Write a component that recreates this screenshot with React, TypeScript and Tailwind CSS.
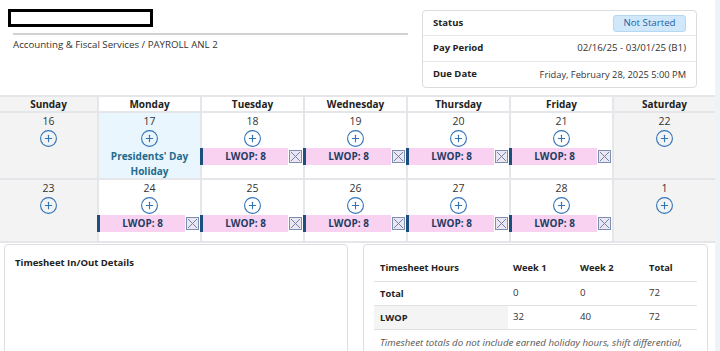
import { CirclePlus } from 'lucide-react';

type Kind = 'weekend' | 'holiday' | 'lwop';

const DAYS = ['Sunday', 'Monday', 'Tuesday', 'Wednesday', 'Thursday', 'Friday', 'Saturday'];

const WEEKS: { d: string; kind: Kind }[][] = [
  [
    { d: '16', kind: 'weekend' },
    { d: '17', kind: 'holiday' },
    { d: '18', kind: 'lwop' },
    { d: '19', kind: 'lwop' },
    { d: '20', kind: 'lwop' },
    { d: '21', kind: 'lwop' },
    { d: '22', kind: 'weekend' },
  ],
  [
    { d: '23', kind: 'weekend' },
    { d: '24', kind: 'lwop' },
    { d: '25', kind: 'lwop' },
    { d: '26', kind: 'lwop' },
    { d: '27', kind: 'lwop' },
    { d: '28', kind: 'lwop' },
    { d: '1', kind: 'weekend' },
  ],
];

const HOURS = [
  { label: 'Total', w1: '0', w2: '0', total: '72', shade: false },
  { label: 'LWOP', w1: '32', w2: '40', total: '72', shade: true },
];

function LwopBar() {
  return (
    <div className="mt-[2px] -ml-[2px] flex h-[17px] items-center">
      <div className="flex h-full flex-1 items-center justify-center border-l-[3px] border-[#1d4f7c] bg-[#f9d2f1] text-[10px] font-bold text-[#1e3d63]">
        LWOP: 8
      </div>
      <div className="mx-[1px] flex h-[13px] w-[13px] items-center justify-center border border-[#7d8fb0] bg-[#ece6f3]">
        <svg width="11" height="11" viewBox="0 0 11 11">
          <path d="M1 1L10 10M10 1L1 10" stroke="#6f84a8" strokeWidth="1" />
        </svg>
      </div>
    </div>
  );
}

function DayCell({ d, kind }: { d: string; kind: Kind }) {
  const bg = kind === 'weekend' ? 'bg-[#f3f3f3]' : kind === 'holiday' ? 'bg-[#e9f6fd]' : 'bg-white';
  return (
    <div className={`${bg} flex flex-col items-stretch pt-[2px]`}>
      <div className="text-center text-[10.5px] leading-[13px] text-[#333]">{d}</div>
      <div className="mt-[2px] flex h-[16px] justify-center">
        <CirclePlus size={19} strokeWidth={1.4} className="-mt-[1.5px] text-[#3274b8]" />
      </div>
      {kind === 'lwop' && <LwopBar />}
      {kind === 'holiday' && (
        <div className="mt-[3px] text-center text-[10px] font-bold leading-[15px] text-[#1f6b8e]">
          Presidents' Day
          <br />
          Holiday
        </div>
      )}
    </div>
  );
}

export default function App() {
  return (
    <div
      className="flex h-[351px] w-[720px] overflow-hidden bg-white text-[9.7px] text-[#333]"
      style={{ fontFamily: '"Open Sans", "Noto Sans", sans-serif' }}
    >
      <div className="flex w-[715px] shrink-0 flex-col">
        {/* Header */}
        <div className="flex h-[95px] shrink-0">
          <div className="w-[410px] pl-[8px] pt-[9px]">
            <div className="h-[18px] w-[145px] border-[3px] border-black" />
            <div className="ml-[5px] mt-[6px] h-[2px] w-[395px] bg-[#d2d2d2]" />
            <div className="ml-[5px] mt-[3px] leading-[14px] text-[#333]">
              Accounting &amp; Fiscal Services / PAYROLL ANL 2
            </div>
          </div>
          <div className="ml-[12px] mt-[10px] h-[78px] w-[275px] rounded-[4px] border border-[#dcdcdc]">
            <div className="flex h-[25px] items-center justify-between border-b border-[#e6e6e6] px-[10px]">
              <span className="text-[9.5px] font-bold text-[#222]">Status</span>
              <span className="flex h-[17px] w-[73px] items-center justify-center rounded-[3px] border border-[#b4d7f4] bg-[#d1e8fb] text-[#24619f]">
                Not Started
              </span>
            </div>
            <div className="flex h-[26px] items-center justify-between border-b border-[#e6e6e6] px-[10px]">
              <span className="text-[9.5px] font-bold text-[#222]">Pay Period</span>
              <span>02/16/25 - 03/01/25 (B1)</span>
            </div>
            <div className="flex h-[25px] items-center justify-between px-[10px]">
              <span className="text-[9.5px] font-bold text-[#222]">Due Date</span>
              <span className="text-[9.3px]">Friday, February 28, 2025 5:00 PM</span>
            </div>
          </div>
        </div>

        {/* Calendar */}
        <div className="grid shrink-0 grid-cols-[97px_repeat(6,1fr)] grid-rows-[14px_65px_61px] gap-[2px] bg-[#e5e6ea] py-[2px]">
          {DAYS.map((day, i) => (
            <div
              key={day}
              className={`${i === 0 || i === 6 ? 'bg-[#f3f3f3]' : 'bg-white'} text-center text-[10px] font-bold leading-[14px] text-[#222]`}
            >
              {day}
            </div>
          ))}
          {WEEKS.flat().map((c, i) => (
            <DayCell key={i} d={c.d} kind={c.kind} />
          ))}
        </div>

        {/* Bottom cards */}
        <div className="mt-[1px] flex shrink-0 gap-[15px] pl-[4px]">
          <div className="h-[120px] w-[344px] rounded-[4px] border border-[#dedede] px-[10px] pt-[10px]">
            <div className="text-[9.5px] font-bold leading-[15px] text-[#222]">Timesheet In/Out Details</div>
          </div>
          <div className="h-[120px] w-[345px] rounded-[4px] border border-[#dedede] px-[10px] pt-[10px]">
            <div className="grid h-[27px] grid-cols-[134px_67px_69px_1fr] items-center border-b border-[#dee2e6] text-[9.3px] font-bold text-[#222]">
              <span className="px-[6px]">Timesheet Hours</span>
              <span className="px-[5px]">Week 1</span>
              <span className="px-[5px]">Week 2</span>
              <span className="px-[5px]">Total</span>
            </div>
            {HOURS.map((r) => (
              <div
                key={r.label}
                className="grid h-[24px] grid-cols-[134px_67px_69px_1fr] items-stretch border-b border-[#dee2e6]"
              >
                <span className={`${r.shade ? 'bg-[#f4f4f4]' : ''} flex items-center px-[6px] text-[9.3px] font-bold text-[#222]`}>
                  {r.label}
                </span>
                <span className="flex items-center px-[5px]">{r.w1}</span>
                <span className="flex items-center px-[5px]">{r.w2}</span>
                <span className="flex items-center px-[5px]">{r.total}</span>
              </div>
            ))}
            <div className="whitespace-nowrap px-[6px] pt-[5px] italic leading-[15px] text-[#555]">
              Timesheet totals do not include earned holiday hours, shift differential,
            </div>
          </div>
        </div>
      </div>
      <div className="w-[5px] shrink-0 bg-[#eef3f8]" />
    </div>
  );
}
